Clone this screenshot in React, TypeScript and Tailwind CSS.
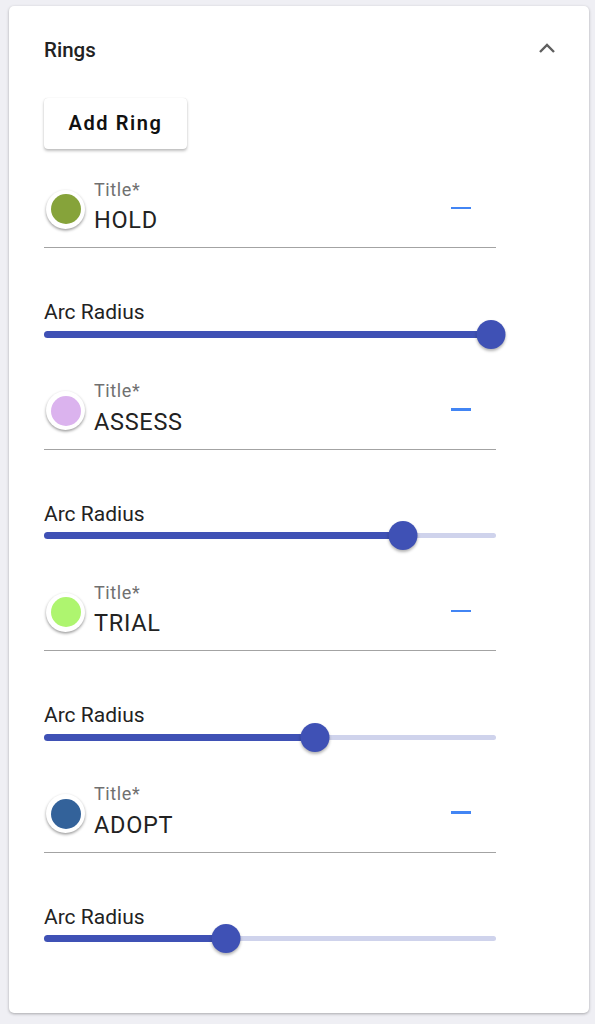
import React from "react";

// Ring editor panel: header, add button, then one title field + arc slider per ring.

type Ring = { title: string; color: string; radius: number };

const rings: Ring[] = [
  { title: "HOLD", color: "#86a33a", radius: 99 },
  { title: "ASSESS", color: "#dbb3ee", radius: 79.5 },
  { title: "TRIAL", color: "#aef56f", radius: 60 },
  { title: "ADOPT", color: "#33629a", radius: 40.3 },
];

function ColorSwatch({ color }: { color: string }) {
  return (
    <div className="ml-[2px] mt-[19.5px] flex h-[39px] w-[39px] shrink-0 items-center justify-center rounded-full bg-white shadow-[0_1.5px_3px_rgba(0,0,0,0.4)]">
      <div className="h-[30px] w-[30px] rounded-full" style={{ backgroundColor: color }} />
    </div>
  );
}

function ArcSlider({ value }: { value: number }) {
  return (
    <div className="relative h-[24px] w-[452px]">
      <div className="absolute left-0 right-0 top-[9.5px] h-[5px] rounded-full bg-[#cfd3ec]" />
      <div
        className="absolute left-0 top-[8.5px] h-[7px] rounded-full bg-[#3f51b5]"
        style={{ width: `${value}%` }}
      />
      <div
        className="absolute top-[-2.5px] h-[29px] w-[29px] -translate-x-1/2 rounded-full bg-[#3f51b5] shadow-[0_2px_3px_rgba(0,0,0,0.3)]"
        style={{ left: `${value}%` }}
      />
    </div>
  );
}

function RingEditor({ ring, first }: { ring: Ring; first: boolean }) {
  return (
    <div className={first ? "mt-[21px]" : "mt-[25.5px]"}>
      <div className="flex h-[78px] w-[452px] items-start border-b border-[#a3a3a3]">
        <ColorSwatch color={ring.color} />
        <div className="ml-[9px] flex flex-1 flex-col pt-[9.5px]">
          <span className="text-[18px] leading-[20px] tracking-[0.6px] text-[#707070]">Title*</span>
          <span className="mt-[6.5px] text-[23.5px] leading-[28px] tracking-[0.7px] text-[#222]">
            {ring.title}
          </span>
        </div>
        <div className="mr-[25px] mt-[36.5px] h-[2.5px] w-[20px] bg-[#4285f4]" />
      </div>
      <div className="mt-[54px] text-[21px] leading-[20px] text-[#222]">Arc Radius</div>
      <ArcSlider value={ring.radius} />
    </div>
  );
}

export default function App() {
  return (
    <div
      className="min-h-screen bg-[#efeff4] px-[9px] pt-[6px]"
      style={{ fontFamily: "Roboto, 'Liberation Sans', sans-serif" }}
    >
      <div className="h-[1007px] w-[580px] rounded-[5px] bg-white pl-[35px] shadow-[0_1px_3px_rgba(0,0,0,0.3)]">
        <div className="flex items-center justify-between pr-[33px] pt-[32px]">
          <span className="text-[20.5px] font-medium leading-[24px] text-[#222]">Rings</span>
          <svg width="18" height="12" viewBox="0 0 18 12" className="mt-[-4px]">
            <path d="M2 10 9 3l7 7" fill="none" stroke="#5f5f5f" strokeWidth="2.4" />
          </svg>
        </div>
        <button className="mt-[36px] h-[51px] w-[143px] rounded-[4px] bg-white pb-[1px] text-[20px] font-semibold tracking-[1.6px] text-[#111] shadow-[0_2px_3px_rgba(0,0,0,0.25),0_0_1px_rgba(0,0,0,0.15)]">
          Add Ring
        </button>
        {rings.map((r, i) => (
          <RingEditor key={r.title} ring={r} first={i === 0} />
        ))}
      </div>
    </div>
  );
}
